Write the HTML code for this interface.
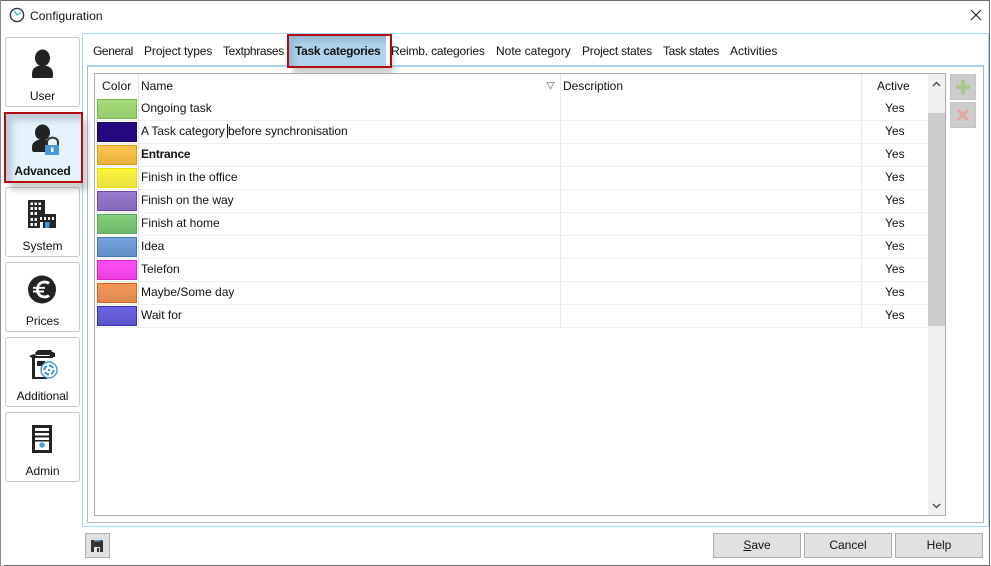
<!DOCTYPE html>
<html><head><meta charset="utf-8">
<style>
html,body{margin:0;padding:0;background:#fff}
body{width:991px;height:566px;position:relative;overflow:hidden;font-family:"Liberation Sans",sans-serif;font-size:12px;color:#111}
.a{position:absolute;box-sizing:border-box}
.t{position:absolute;white-space:nowrap;line-height:16px;height:16px}
.side{position:absolute;left:5px;width:75px;height:70px;border:1px solid #c8c8c8;border-radius:3px;background:#fff;box-sizing:border-box}
.lbl{position:absolute;left:0;width:73px;text-align:center;line-height:16px;white-space:nowrap}
.line{position:absolute;background:#eee}
.sw{position:absolute;left:97px;width:40px;height:20px;box-sizing:border-box;border:1px solid}
.btn{position:absolute;top:533px;width:88px;height:25px;background:#e1e1e1;border:1px solid #adadad;box-sizing:border-box;text-align:center;line-height:23px}
svg{position:absolute;overflow:visible}
</style></head><body>
<div class="a" style="left:0;top:0;width:989px;height:1px;background:#6b6b6b"></div>
<div class="a" style="left:0;top:0;width:1px;height:566px;background:#8a8a8a"></div>
<div class="a" style="left:989px;top:0;width:1px;height:566px;background:#6b6b6b"></div>
<div class="a" style="left:4px;top:565px;width:985px;height:1px;background:#6b6b6b"></div>

<svg style="left:9px;top:7px" width="16" height="16" viewBox="0 0 16 16"><circle cx="8" cy="8" r="6.600" fill="#fff" stroke="#2b3a42" stroke-width="1.400"/><path d="M8 8 L5.500 4 M8 8 L11.500 6" stroke="#3fb0b8" stroke-width="1.300" fill="none"/></svg>
<div class="t" style="left:30px;top:8px;letter-spacing:.1px">Configuration</div>
<svg style="left:970px;top:9px" width="12" height="12" viewBox="0 0 12 12"><path d="M1 1L11 11M11 1L1 11" stroke="#222" stroke-width="1.100"/></svg>

<!-- side buttons -->
<div class="side" style="top:37px"><svg style="left:26px;top:11px" width="26" height="30" viewBox="0 0 26 30"><ellipse cx="10.500" cy="9" rx="7.500" ry="8.500" fill="#222"/><path d="M1 29C0 29 0 27.500 0 25C0 20 3 18 6 17L15 17C18 18 21 20 21 25C21 27.500 21 29 20 29Z" fill="#222"/></svg><div class="lbl" style="top:50px">User</div></div>

<div class="side" style="top:187px"><svg style="left:22px;top:12px" width="30" height="30" viewBox="0 0 30 30"><path d="M0 0H17V14H28V28H0Z" fill="#262626"/><g fill="#fff"><rect x="2.500" y="2.500" width="2.500" height="2.500"/><rect x="6.500" y="2.500" width="2.500" height="2.500"/><rect x="10.500" y="2.500" width="2.500" height="2.500"/><rect x="2.500" y="7" width="2.500" height="3"/><rect x="6.500" y="7" width="2.500" height="3"/><rect x="10.500" y="7" width="2.500" height="3"/><rect x="2.500" y="12" width="2.500" height="3"/><rect x="6.500" y="12" width="2.500" height="3"/><rect x="2.500" y="18" width="2.500" height="3"/><rect x="6.500" y="18" width="2.500" height="3"/><rect x="2.500" y="23" width="2.500" height="3"/><rect x="6.500" y="23" width="2.500" height="3"/><rect x="12" y="17" width="2" height="3"/><rect x="16" y="17" width="2" height="3"/><rect x="20" y="17" width="2" height="3"/><rect x="24" y="17" width="2" height="3"/><rect x="12" y="22" width="3" height="6"/></g><rect x="17" y="22" width="4.500" height="6" fill="#3f95dc"/></svg><div class="lbl" style="top:50px">System</div></div>

<div class="a" style="left:10px;top:120px;width:78px;height:70px;background:rgba(90,90,90,.3);filter:blur(3px);z-index:1"></div>
<div class="a" style="left:4px;top:112px;width:79px;height:71px;border:2px solid #b40a12;background:#e4f3fd;box-shadow:inset 6px 6px 7px rgba(110,130,140,.35);z-index:2"></div>
<svg style="left:31px;top:124px;z-index:3" width="30" height="32" viewBox="0 0 30 32"><ellipse cx="11.500" cy="8.500" rx="7.500" ry="8" fill="#222"/><path d="M3 28C1 28 1 26 1 23C1 19 4 17 7 16L15 16C18 17 20 19 20 23L20 28Z" fill="#222"/><path d="M16 22V18.500C16 12 27 12 27 18.500V22" fill="#e4f3fd" stroke="#333" stroke-width="2"/><rect x="14" y="21" width="14" height="10" fill="#4a97d6"/><rect x="20" y="23.500" width="2.500" height="4.500" fill="#fff"/></svg>
<div class="lbl" style="left:6px;top:163px;font-weight:bold;letter-spacing:-.15px;z-index:3">Advanced</div>

<div class="side" style="top:262px"><svg style="left:22px;top:12px" width="30" height="30" viewBox="0 0 30 30"><circle cx="14" cy="14.500" r="14" fill="#222"/><path d="M21 8.500C19 6.500 14 6.500 11.500 9C10 10.500 9.500 12.500 9.500 14.500C9.500 16.500 10 18.500 11.500 20C14 22.500 19 22.500 21 20.500" fill="none" stroke="#fff" stroke-width="2.800"/><path d="M5 12.800H17M5 16.500H16" stroke="#fff" stroke-width="1.900"/></svg><div class="lbl" style="top:50px">Prices</div></div>

<div class="side" style="top:337px"><svg style="left:23px;top:12px" width="32" height="32" viewBox="0 0 32 32"><path d="M0 6L5 4L8 6H24V8H6V27H18V29H3V8Z" fill="#222"/><path d="M6 3L9 0H23L20 5H7Z" fill="#222"/><path d="M19 0L26 3V7H21Z" fill="#222"/><rect x="8" y="11" width="8" height="5" fill="#222"/><circle cx="20" cy="20" r="8" fill="#fff" stroke="#4a9ad8" stroke-width="1.500"/><circle cx="20" cy="20" r="4.500" fill="none" stroke="#4a9ad8" stroke-width="2.200" stroke-dasharray="5 2"/><circle cx="20" cy="20" r="1.200" fill="#4a9ad8"/></svg><div class="lbl" style="top:50px;letter-spacing:-.1px">Additional</div></div>

<div class="side" style="top:412px"><svg style="left:26px;top:12px" width="20" height="29" viewBox="0 0 20 29"><rect x="0" y="0" width="20" height="28" fill="#222"/><rect x="3" y="3" width="14" height="22" fill="#fff"/><rect x="3" y="6" width="14" height="2" fill="#222"/><rect x="3" y="10.500" width="14" height="2" fill="#222"/><rect x="3" y="15" width="14" height="1.500" fill="#222"/><circle cx="10" cy="20" r="2.700" fill="#4a9ad8"/></svg><div class="lbl" style="top:50px">Admin</div></div>

<!-- tab panel -->
<div class="a" style="left:82px;top:33px;width:907px;height:494px;border:1px solid #9fdcf4;background:#fff"></div>
<div class="a" style="left:87px;top:65px;width:897px;height:458px;border:1px solid #b5b5b5;border-top:2px solid #a9d3ec;background:#fff"></div>

<div class="t" style="left:93px;top:43px;letter-spacing:-.4px">General</div>
<div class="t" style="left:144px;top:43px;letter-spacing:-.08px">Project types</div>
<div class="t" style="left:223px;top:43px;letter-spacing:-.35px">Textphrases</div>
<div class="a" style="left:293px;top:46px;width:100px;height:28px;background:rgba(90,90,90,.3);filter:blur(3px)"></div>
<div class="a" style="left:287px;top:34px;width:105px;height:34px;border:2px solid #b40a12;background:#fff"></div>
<div class="a" style="left:289px;top:36px;width:97px;height:30px;background:#b0d4ee;box-shadow:inset 5px 5px 6px rgba(90,120,140,.3)"></div>
<div class="t" style="left:295px;top:43px;font-weight:bold;letter-spacing:-.3px">Task categories</div>
<div class="t" style="left:391px;top:43px;letter-spacing:-.18px">Reimb. categories</div>
<div class="t" style="left:496px;top:43px">Note category</div>
<div class="t" style="left:582px;top:43px;letter-spacing:-.2px">Project states</div>
<div class="t" style="left:663px;top:43px;letter-spacing:-.38px">Task states</div>
<div class="t" style="left:730px;top:43px">Activities</div>

<!-- table -->
<div class="a" style="left:94px;top:73px;width:852px;height:443px;border:1px solid #ababab;background:#fff"></div>
<div class="t" style="left:102px;top:78px;letter-spacing:.15px">Color</div>
<div class="t" style="left:141px;top:78px">Name</div>
<div class="t" style="left:563px;top:78px">Description</div>
<div class="t" style="left:877px;top:78px">Active</div>
<svg style="left:546px;top:82px" width="9" height="8" viewBox="0 0 9 8"><path d="M1 .5H8L4.500 7Z" fill="none" stroke="#999"/></svg>
<div class="line" style="left:138px;top:74px;width:1px;height:254px;background:#e4e4e4"></div>
<div class="line" style="left:560px;top:74px;width:1px;height:254px;background:#e8e8e8"></div>
<div class="line" style="left:861px;top:74px;width:1px;height:254px;background:#e8e8e8"></div>
<div class="line" style="left:95px;top:120px;width:833px;height:1px"></div>
<div class="line" style="left:95px;top:143px;width:833px;height:1px"></div>
<div class="line" style="left:95px;top:166px;width:833px;height:1px"></div>
<div class="line" style="left:95px;top:189px;width:833px;height:1px"></div>
<div class="line" style="left:95px;top:212px;width:833px;height:1px"></div>
<div class="line" style="left:95px;top:235px;width:833px;height:1px"></div>
<div class="line" style="left:95px;top:258px;width:833px;height:1px"></div>
<div class="line" style="left:95px;top:281px;width:833px;height:1px"></div>
<div class="line" style="left:95px;top:304px;width:833px;height:1px"></div>
<div class="line" style="left:95px;top:327px;width:833px;height:1px"></div>

<div class="sw" style="top:99px;border-color:#76b64f;background:linear-gradient(#a8dc7c,#92cc6c)"></div>
<div class="sw" style="top:122px;border-color:#14085c;background:#26087e"></div>
<div class="sw" style="top:145px;border-color:#e89a10;background:linear-gradient(#fcc64e,#e8b040)"></div>
<div class="sw" style="top:168px;border-color:#f0e000;background:linear-gradient(#fdf73c,#e8e040)"></div>
<div class="sw" style="top:191px;border-color:#6a48a8;background:linear-gradient(#9a7cd0,#8468b8)"></div>
<div class="sw" style="top:214px;border-color:#58a858;background:linear-gradient(#86d07c,#6cb868)"></div>
<div class="sw" style="top:237px;border-color:#3c78bc;background:linear-gradient(#74a0dc,#6490c8)"></div>
<div class="sw" style="top:260px;border-color:#e020d0;background:linear-gradient(#fc50f4,#ec40e0)"></div>
<div class="sw" style="top:283px;border-color:#d46818;background:linear-gradient(#f89858,#dc8850)"></div>
<div class="sw" style="top:306px;border-color:#3c30c0;background:linear-gradient(#6c64e4,#5c54c8)"></div>

<div class="t" style="left:141px;top:100px">Ongoing task</div>
<div class="t" style="left:141px;top:123px;letter-spacing:-.05px">A Task category before synchronisation</div>
<div class="a" style="left:227px;top:124px;width:1px;height:14px;background:#14085c"></div>
<div class="t" style="left:141px;top:146px;font-weight:bold;letter-spacing:-.25px">Entrance</div>
<div class="t" style="left:141px;top:169px">Finish in the office</div>
<div class="t" style="left:141px;top:192px;letter-spacing:-.05px">Finish on the way</div>
<div class="t" style="left:141px;top:215px">Finish at home</div>
<div class="t" style="left:141px;top:238px">Idea</div>
<div class="t" style="left:141px;top:261px">Telefon</div>
<div class="t" style="left:141px;top:284px">Maybe/Some day</div>
<div class="t" style="left:141px;top:307px">Wait for</div>

<div class="t" style="left:885px;top:100px">Yes</div>
<div class="t" style="left:885px;top:123px">Yes</div>
<div class="t" style="left:885px;top:146px">Yes</div>
<div class="t" style="left:885px;top:169px">Yes</div>
<div class="t" style="left:885px;top:192px">Yes</div>
<div class="t" style="left:885px;top:215px">Yes</div>
<div class="t" style="left:885px;top:238px">Yes</div>
<div class="t" style="left:885px;top:261px">Yes</div>
<div class="t" style="left:885px;top:284px">Yes</div>
<div class="t" style="left:885px;top:307px">Yes</div>

<!-- scrollbar -->
<div class="a" style="left:928px;top:74px;width:17px;height:441px;background:#f0f0f0"></div>
<div class="a" style="left:928px;top:113px;width:17px;height:213px;background:#cdcdcd"></div>
<svg style="left:932px;top:81px" width="9" height="6" viewBox="0 0 9 6"><path d="M1 5L4.500 1.500L8 5" fill="none" stroke="#505050" stroke-width="1.500"/></svg>
<svg style="left:932px;top:503px" width="9" height="6" viewBox="0 0 9 6"><path d="M1 1L4.500 4.500L8 1" fill="none" stroke="#505050" stroke-width="1.500"/></svg>

<!-- add/remove -->
<div class="a" style="left:950px;top:74px;width:26px;height:26px;background:#cccccc;border:1px solid #c4c4c4"></div>
<svg style="left:955px;top:79px" width="16" height="16" viewBox="0 0 16 16"><path d="M6 1H10V6H15V10H10V15H6V10H1V6H6Z" fill="#a9c88a"/></svg>
<div class="a" style="left:950px;top:102px;width:26px;height:26px;background:#cccccc;border:1px solid #c4c4c4"></div>
<svg style="left:957px;top:109px" width="12" height="12" viewBox="0 0 12 12"><path d="M1 1L11 11M11 1L1 11" stroke="#e8a59c" stroke-width="3"/></svg>

<!-- bottom -->
<div class="a" style="left:85px;top:533px;width:25px;height:25px;background:#e1e1e1;border:1px solid #adadad"></div>
<svg style="left:91px;top:540px" width="13" height="12" viewBox="0 0 13 12"><path d="M0 0H11L12 1V12H0Z" fill="#333"/><rect x="3" y="0" width="6.500" height="1.500" fill="#5b9bd5"/><rect x="3" y="7" width="6" height="5" fill="#e1e1e1"/><rect x="6" y="8" width="2" height="4" fill="#333"/></svg>
<div class="btn" style="left:713px"><u>S</u>ave</div>
<div class="btn" style="left:804px">Cancel</div>
<div class="btn" style="left:895px">Help</div>
</body></html>
